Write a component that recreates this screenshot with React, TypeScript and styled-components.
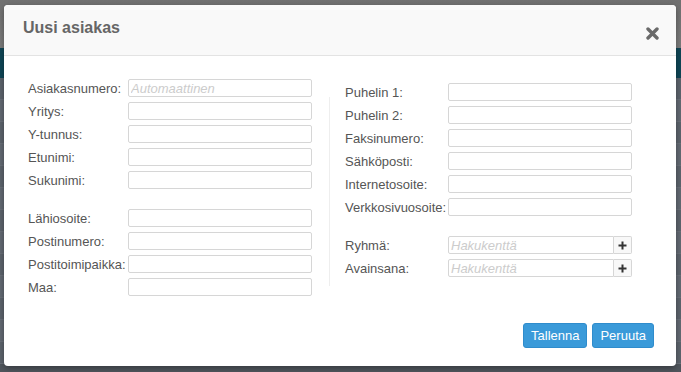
import React, { FC } from "react";
import styled, { createGlobalStyle, css } from "styled-components";

const GlobalStyle = createGlobalStyle`
  html, body {
    margin: 0;
    padding: 0;
    height: 100%;
    overflow: hidden;
  }
  body {
    font-family: "Liberation Sans", Arial, sans-serif;
    font-size: 13px;
    color: #555;
  }
`;

type FieldDef = {
    label: string;
    placeholder?: string;
    addon?: boolean;
};

const leftGroups: FieldDef[][] = [
    [
        { label: "Asiakasnumero:", placeholder: "Automaattinen" },
        { label: "Yritys:" },
        { label: "Y-tunnus:" },
        { label: "Etunimi:" },
        { label: "Sukunimi:" },
    ],
    [
        { label: "Lähiosoite:" },
        { label: "Postinumero:" },
        { label: "Postitoimipaikka:" },
        { label: "Maa:" },
    ],
];

const rightGroups: FieldDef[][] = [
    [
        { label: "Puhelin 1:" },
        { label: "Puhelin 2:" },
        { label: "Faksinumero:" },
        { label: "Sähköposti:" },
        { label: "Internetosoite:" },
        { label: "Verkkosivuosoite:" },
    ],
    [
        { label: "Ryhmä:", placeholder: "Hakukenttä", addon: true },
        { label: "Avainsana:", placeholder: "Hakukenttä", addon: true },
    ],
];

const CloseIcon: FC = () => (
    <svg width="13" height="13" viewBox="0 0 13 13">
        <path d="M2 2 L11 11 M11 2 L2 11" stroke="#6a6a6a" strokeWidth="3.4" strokeLinecap="round" />
    </svg>
);

const PlusIcon: FC = () => (
    <svg width="9" height="9" viewBox="0 0 9 9">
        <path d="M4.5 0.5 V8.5 M0.5 4.5 H8.5" stroke="#333" strokeWidth="2" />
    </svg>
);

const FieldGroups: FC<{ groups: FieldDef[][]; labelWidth: number }> = ({ groups, labelWidth }) => (
    <>
        {groups.map((group, gi) => (
            <Group key={gi}>
                {group.map((f) => (
                    <Row key={f.label}>
                        <Label width={labelWidth}>{f.label}</Label>
                        <InputWrap>
                            <Input placeholder={f.placeholder} hasAddon={f.addon} />
                            {f.addon && (
                                <AddonButton>
                                    <PlusIcon />
                                </AddonButton>
                            )}
                        </InputWrap>
                    </Row>
                ))}
            </Group>
        ))}
    </>
);

const App: FC = () => {
    return (
        <Page>
            <GlobalStyle />
            <Backdrop>
                <TopBar />
                <TealBar />
                {Array.from({ length: 13 }).map((_, i) => (
                    <TableRow key={i} odd={i % 2 === 1} />
                ))}
            </Backdrop>

            <Overlay>
                <Modal>
                    <Header>
                        <Title>Uusi asiakas</Title>
                        <CloseButton aria-label="Sulje">
                            <CloseIcon />
                        </CloseButton>
                    </Header>

                    <Body>
                        <Columns>
                            <LeftColumn>
                                <FieldGroups groups={leftGroups} labelWidth={100} />
                            </LeftColumn>
                            <Divider />
                            <RightColumn>
                                <FieldGroups groups={rightGroups} labelWidth={103} />
                            </RightColumn>
                        </Columns>

                        <Footer>
                            <Button>Tallenna</Button>
                            <Button>Peruuta</Button>
                        </Footer>
                    </Body>
                </Modal>
            </Overlay>
        </Page>
    );
};

export default App;

const Page = styled.div`
  position: relative;
  width: 681px;
  height: 372px;
  overflow: hidden;
  background: #50565d;
`;

const Backdrop = styled.div`
  display: flex;
  flex-direction: column;
`;

const TopBar = styled.div`
  height: 48px;
  background: linear-gradient(#717171, #7c7c7c);
`;

const TealBar = styled.div`
  height: 30px;
  background: #0f4656;
`;

const TableRow = styled.div<{ odd?: boolean }>`
  height: 22px;
  box-sizing: border-box;
  border-bottom: 1px solid #6a7079;
  background: #5d646d;

  ${(p) =>
        p.odd &&
        css`
      background: #636a73;
    `}
`;

const Overlay = styled.div`
  position: absolute;
  inset: 0;
  padding: 5px 0 0 4px;
`;

const Modal = styled.div`
  width: 672px;
  height: 361px;
  display: flex;
  flex-direction: column;
  background: #fff;
  border-radius: 4px;
  box-shadow: 0 2px 6px rgba(0, 0, 0, 0.35);
  overflow: hidden;
`;

const Header = styled.div`
  height: 51px;
  box-sizing: border-box;
  display: flex;
  justify-content: space-between;
  align-items: flex-start;
  padding: 13px 17px 0 19px;
  background: #f9f9f9;
  border-bottom: 1px solid #e3e3e3;
`;

const Title = styled.h3`
  margin: 0;
  font-size: 16px;
  line-height: 20px;
  font-weight: bold;
  color: #666;
`;

const CloseButton = styled.button`
  margin-top: 9px;
  padding: 0;
  border: none;
  background: none;
  display: flex;
  cursor: pointer;
`;

const Body = styled.div`
  flex: 1;
  display: flex;
  flex-direction: column;
  padding: 23px 22px 18px 24px;
`;

const Columns = styled.div`
  display: flex;
  align-items: flex-start;
`;

const LeftColumn = styled.div`
  width: 284px;
  display: flex;
  flex-direction: column;
  gap: 20px;
`;

const Divider = styled.div`
  width: 1px;
  height: 189px;
  margin: 18px 15px 0 17px;
  background: #eee;
`;

const RightColumn = styled.div`
  display: flex;
  flex-direction: column;
  gap: 20px;
  margin-top: 4px;
`;

const Group = styled.div`
  display: flex;
  flex-direction: column;
  gap: 5px;
`;

const Row = styled.div`
  display: flex;
  align-items: center;
  height: 18px;
`;

const Label = styled.label<{ width: number }>`
  flex: 0 0 ${(p) => p.width}px;
  white-space: nowrap;
  font-size: 13px;
  color: #555;
`;

const InputWrap = styled.div`
  display: flex;
  width: 184px;
  height: 18px;
`;

const Input = styled.input<{ hasAddon?: boolean }>`
  flex: 1;
  min-width: 0;
  height: 18px;
  box-sizing: border-box;
  margin: 0;
  padding: 0 2px;
  border: 1px solid #d6d6d6;
  border-radius: 2px;
  font-family: "Liberation Sans", Arial, sans-serif;
  font-size: 13px;
  color: #555;
  background: #fff;

  &::placeholder {
    color: #cccccc;
    font-style: italic;
  }

  ${(p) =>
        p.hasAddon &&
        css`
      border-radius: 2px 0 0 2px;
    `}
`;

const AddonButton = styled.button`
  flex: 0 0 18px;
  height: 18px;
  box-sizing: border-box;
  margin: 0;
  padding: 0;
  display: flex;
  align-items: center;
  justify-content: center;
  border: 1px solid #d6d6d6;
  border-left: none;
  border-radius: 0 2px 2px 0;
  background: #f8f8f8;
`;

const Footer = styled.div`
  margin-top: auto;
  display: flex;
  justify-content: flex-end;
  gap: 5px;
`;

const Button = styled.button`
  height: 25px;
  padding: 0 7px;
  border: 1px solid #2f8ccc;
  border-radius: 3px;
  background: #3a9ad9;
  color: #fff;
  font-family: "Liberation Sans", Arial, sans-serif;
  font-size: 13px;
  cursor: pointer;
`;
